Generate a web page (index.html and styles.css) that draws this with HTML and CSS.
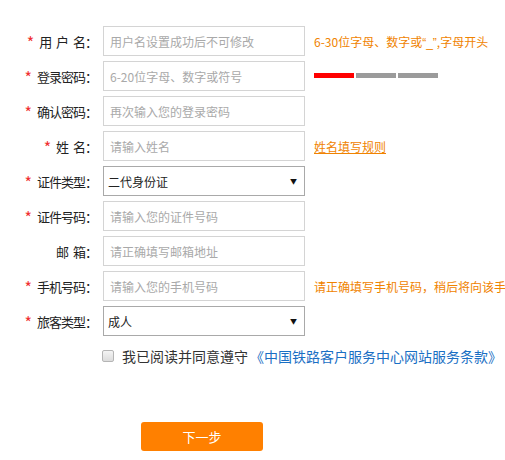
FILE: index.html
```html
<!DOCTYPE html>
<html lang="zh-CN">
<head>
<meta charset="utf-8">
<title>注册</title>
<link rel="stylesheet" href="styles.css">
</head>
<body>
<div class="form">
  <div class="row">
    <div class="label"><span class="req">*</span> 用 户 名：</div>
    <div class="input placeholder">用户名设置成功后不可修改</div>
    <div class="hint">6-30位字母、数字或<span class="latin">“_”</span>,字母开头</div>
  </div>
  <div class="row">
    <div class="label"><span class="req">*</span> 登录密码：</div>
    <div class="input placeholder">6-20位字母、数字或符号</div>
    <div class="strength"><span class="seg seg-red"></span><span class="seg"></span><span class="seg"></span></div>
  </div>
  <div class="row">
    <div class="label"><span class="req">*</span> 确认密码：</div>
    <div class="input placeholder">再次输入您的登录密码</div>
  </div>
  <div class="row">
    <div class="label"><span class="req">*</span> 姓 名：</div>
    <div class="input placeholder">请输入姓名</div>
    <a class="hint hint-link" href="#">姓名填写规则</a>
  </div>
  <div class="row">
    <div class="label"><span class="req">*</span> 证件类型：</div>
    <div class="input select"><span>二代身份证</span><span class="arrow">▼</span></div>
  </div>
  <div class="row">
    <div class="label"><span class="req">*</span> 证件号码：</div>
    <div class="input placeholder">请输入您的证件号码</div>
  </div>
  <div class="row">
    <div class="label">邮 箱：</div>
    <div class="input placeholder">请正确填写邮箱地址</div>
  </div>
  <div class="row">
    <div class="label"><span class="req">*</span> 手机号码：</div>
    <div class="input placeholder">请输入您的手机号码</div>
    <div class="hint">请正确填写手机号码，稍后将向该手</div>
  </div>
  <div class="row">
    <div class="label"><span class="req">*</span> 旅客类型：</div>
    <div class="input select"><span>成人</span><span class="arrow">▼</span></div>
  </div>
  <div class="agree">
    <span class="checkbox"></span>
    <span class="agree-text">我已阅读并同意遵守</span>
    <a class="terms" href="#">《中国铁路客户服务中心网站服务条款》</a>
  </div>
  <div class="actions">
    <button class="next" type="button">下一步</button>
  </div>
</div>
</body>
</html>
```
FILE: styles.css
```css
html, body {
  margin: 0;
  padding: 0;
  background: #fff;
  overflow: hidden;
}
body {
  font-family: "Noto Sans CJK SC", "Microsoft YaHei", sans-serif;
  font-size: 12px;
  color: #333;
  width: 505px;
  height: 460px;
}
.form {
  padding-top: 26px;
}
.row {
  display: flex;
  align-items: center;
  height: 30px;
  margin-bottom: 5px;
  white-space: nowrap;
}
.label {
  width: 97px;
  margin-right: 6px;
  text-align: right;
  font-size: 13px;
  letter-spacing: -1px;
  word-spacing: 3px;
  color: #222;
  flex-shrink: 0;
}
.req {
  color: #f03030;
  font-size: 16px;
  line-height: 1;
  vertical-align: -2px;
  letter-spacing: 0;
}
.input {
  box-sizing: border-box;
  width: 202px;
  height: 30px;
  border: 1px solid #d4d4d4;
  padding: 0 6px;
  display: flex;
  align-items: center;
  flex-shrink: 0;
  background: #fff;
}
.placeholder {
  color: #a9a9a9;
}
.select {
  border-color: #a9a9a9;
  color: #222;
  padding: 0 7px 0 4px;
  justify-content: space-between;
}
.arrow {
  font-size: 7px;
  color: #111;
}
.hint {
  margin-left: 9px;
  color: #f08300;
  font-size: 12px;
}
.latin {
  font-family: "Liberation Sans", sans-serif;
}
.hint-link {
  text-decoration: underline;
}
.strength {
  margin-left: 9px;
  display: flex;
  gap: 2px;
  margin-top: -2px;
}
.seg {
  display: block;
  width: 40px;
  height: 5px;
  background: #9b9b9b;
}
.seg-red {
  background: #f00;
}
.agree {
  display: flex;
  align-items: center;
  height: 20px;
  margin-top: 10px;
  padding-left: 102px;
  font-size: 14px;
  white-space: nowrap;
}
.checkbox {
  box-sizing: border-box;
  width: 12px;
  height: 12px;
  border: 1px solid #b5b5b5;
  border-radius: 2px;
  background: linear-gradient(#f4f4f4, #dcdcdc);
  margin-right: 8px;
}
.agree-text {
  color: #333;
}
.terms {
  color: #1a6fc4;
  text-decoration: none;
  margin-left: 2px;
}
.actions {
  padding-left: 141px;
  margin-top: 56px;
}
.next {
  width: 122px;
  height: 29px;
  border: none;
  border-radius: 3px;
  background: #ff8000;
  color: #fff;
  font-family: "Noto Sans CJK SC", "Microsoft YaHei", sans-serif;
  font-size: 13px;
  padding: 0;
}
```
